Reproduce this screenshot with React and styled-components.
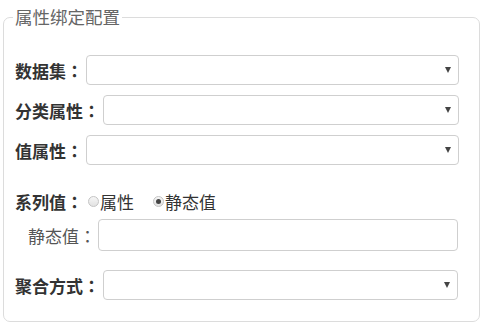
import React, { useState } from 'react';
import styled, { createGlobalStyle } from 'styled-components';

const GlobalStyle = createGlobalStyle`
  html, body {
    margin: 0;
    padding: 0;
    background: #ffffff;
  }
  body {
    font-family: "Noto Sans CJK SC", "Noto Sans", sans-serif;
    color: #333;
  }
`;

const Panel = styled.fieldset`
  box-sizing: border-box;
  width: 477px;
  margin: 7px 0 0 3px;
  padding: 0 20px 21px 9px;
  border: 1px solid #dcdcdc;
  border-radius: 7px;
`;

const Legend = styled.legend`
  padding: 0 2px;
  font-size: 17.5px;
  line-height: 20px;
  color: #666;
`;

const Row = styled.div`
  display: flex;
  align-items: center;
  height: ${p => p.$h || 30}px;
  margin-top: ${p => p.$mt}px;
  padding-left: ${p => p.$indent || 2}px;
`;

const Label = styled.span`
  flex: none;
  font-size: 17px;
  font-weight: ${p => (p.$light ? 400 : 700)};
  color: ${p => (p.$light ? '#555' : '#333')};
  margin-right: ${p => p.$gap || 3}px;
  white-space: nowrap;
`;

// centred full-width colon, as in the original rendering
const Colon = styled.span`
  font-family: "Noto Sans CJK JP", "Noto Sans CJK SC", sans-serif;
`;

const SelectBox = styled.div`
  position: relative;
  flex: 1;
  height: 100%;
  box-sizing: border-box;
  border: 1px solid #cfcfcf;
  border-radius: 4px;
  background: #fff;
  margin-right: ${p => p.$mr || 0}px;

  &::after {
    content: '';
    position: absolute;
    right: 7px;
    top: 50%;
    margin-top: -3px;
    border-left: 3.5px solid transparent;
    border-right: 3.5px solid transparent;
    border-top: 6px solid #444;
  }
`;

const TextInput = styled.input`
  flex: 1;
  height: 100%;
  box-sizing: border-box;
  border: 1px solid #cfcfcf;
  border-radius: 4px;
  background: #fff;
  margin: 0 1px 0 0;
  padding: 0 8px;
  font-family: inherit;
  font-size: 14px;
  outline: none;
`;

const RadioGroup = styled.div`
  display: flex;
  align-items: center;
  gap: 19px;
  margin-left: 2px;
`;

const RadioItem = styled.label`
  display: flex;
  align-items: center;
  font-size: 17px;
  color: #333;
  cursor: pointer;
`;

const RadioDot = styled.span`
  position: relative;
  box-sizing: border-box;
  width: 11px;
  height: 11px;
  margin-right: 1px;
  border-radius: 50%;
  border: 1px solid #c4c4c4;
  background: linear-gradient(#f6f6f6, #e2e2e2);

  &::after {
    content: '';
    display: ${p => (p.$checked ? 'block' : 'none')};
    position: absolute;
    left: 2px;
    top: 2px;
    width: 5px;
    height: 5px;
    border-radius: 50%;
    background: #444;
  }
`;

const App = () => {
  const [mode, setMode] = useState('static');

  return (
    <>
      <GlobalStyle />
      <Panel>
        <Legend>属性绑定配置</Legend>
        <Row $mt={28}>
          <Label>数据集<Colon>：</Colon></Label>
          <SelectBox />
        </Row>
        <Row $mt={10}>
          <Label>分类属性<Colon>：</Colon></Label>
          <SelectBox />
        </Row>
        <Row $mt={10}>
          <Label>值属性<Colon>：</Colon></Label>
          <SelectBox />
        </Row>
        <Row $mt={21}>
          <Label $gap={3}>系列值<Colon>：</Colon></Label>
          <RadioGroup>
            <RadioItem onClick={() => setMode('attr')}>
              <RadioDot $checked={mode === 'attr'} />
              属性
            </RadioItem>
            <RadioItem onClick={() => setMode('static')}>
              <RadioDot $checked={mode === 'static'} />
              静态值
            </RadioItem>
          </RadioGroup>
        </Row>
        <Row $mt={3} $h={32} $indent={15}>
          <Label $light $gap={2}>静态值<Colon>：</Colon></Label>
          <TextInput type="text" />
        </Row>
        <Row $mt={19}>
          <Label>聚合方式<Colon>：</Colon></Label>
          <SelectBox $mr={1} />
        </Row>
      </Panel>
    </>
  );
};

export default App;
